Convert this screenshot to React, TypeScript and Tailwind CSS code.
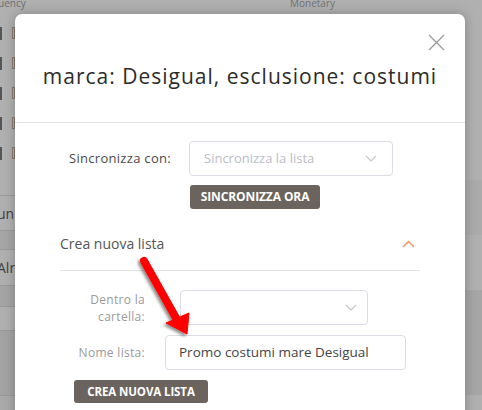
import React from "react";

const font = "font-['Open_Sans','Noto_Sans',sans-serif]";

const ChevronDown = ({ className }: { className?: string }) => (
  <svg className={className} width="12" height="7" viewBox="0 0 12 7" fill="none">
    <path d="M1 1l5 5 5-5" stroke="currentColor" strokeWidth="1.2" />
  </svg>
);

// the page behind the dimmed overlay, only its edges show
const Backdrop = () => (
  <div className="absolute inset-0 flex bg-[#b0b0b0]">
    <div className="w-[15px] shrink-0 flex flex-col">
      <p className="h-[31px] -ml-[2px] -mt-[4px] text-[10px] text-[#6e6e6e] whitespace-nowrap">uency</p>
      <div className="flex flex-col gap-[17px]">
        {[0, 1, 2, 3, 4].map((i) => (
          <div key={i} className="flex gap-[10px]">
            <div className="w-[2px] h-[13px] bg-[#555]" />
            <div className="w-[4px] h-[12px] border border-[#8a7a70]" />
          </div>
        ))}
      </div>
      <div className="mt-[35px] h-[35px] border-t border-[#999] flex items-center overflow-hidden">
        <span className="-ml-[3px] text-[14px] text-[#3f3f3f]">un</span>
      </div>
      <div className="h-[20px] bg-[#a6a6a6] border-y border-[#9a9a9a]" />
      <div className="h-[35px] flex items-center overflow-hidden">
        <span className="-ml-[3px] text-[14px] text-[#3f3f3f]">Alr</span>
      </div>
      <div className="h-[22px] bg-[#a5a5a5] border-y border-[#9a9a9a]" />
      <div className="h-[23px]" />
      <div className="h-[65px] bg-[#a3a3a3] border-t border-[#999]" />
      <div className="flex-1 bg-[#a9a9a9] border-t border-[#999]" />
    </div>
    <div className="flex-1">
      <p className="ml-[275px] -mt-[4px] text-[10px] text-[#707070]">Monetary</p>
    </div>
    <div className="w-[17px] shrink-0 flex flex-col">
      <div className="h-[180px]" />
      <div className="h-[55px] bg-[#ababab]" />
      <div className="h-[55px]" />
      <div className="h-[105px] bg-[#a6a6a6]" />
    </div>
  </div>
);

const Arrow = () => (
  <svg className="absolute left-0 top-0 pointer-events-none" width="482" height="410">
    <defs>
      <filter id="sh" x="-20%" y="-20%" width="140%" height="140%">
        <feDropShadow dx="-2" dy="2" stdDeviation="1.5" floodColor="#000" floodOpacity="0.45" />
      </filter>
    </defs>
    <g filter="url(#sh)" fill="#f00" stroke="#f00">
      <line x1="144" y1="261" x2="176" y2="318" strokeWidth="8" strokeLinecap="round" />
      <polygon points="166,323 189,313 187,334" strokeWidth="1" strokeLinejoin="round" />
    </g>
  </svg>
);

export default function App() {
  return (
    <div className={`relative w-[482px] h-[410px] overflow-hidden ${font}`}>
      <Backdrop />
      <div className="absolute left-[15px] top-[14px] w-[450px] h-[420px] rounded-[7px] bg-white shadow-[0_0_12px_rgba(0,0,0,0.25)]">
        {/* header */}
        <div className="relative h-[109px] border-b border-[#e3e3e3] pt-[48px] text-center">
          <h1 className="text-[21px] leading-[28px] tracking-[1px] text-[#2b2b2b]">
            marca: Desigual, esclusione: costumi
          </h1>
          <button className="absolute right-[20px] top-[20px] text-[#9a9a9a]">
            <svg width="17" height="17" viewBox="0 0 17 17">
              <path d="M1 1l15 15M16 1L1 16" stroke="currentColor" strokeWidth="1.3" />
            </svg>
          </button>
        </div>

        {/* sync */}
        <div className="flex items-center pt-[18px]">
          <label className="w-[156px] text-right text-[13px] tracking-[0.3px] text-[#4a4a4a]">Sincronizza con:</label>
          <div className="ml-[18px] w-[204px] h-[35px] flex items-center justify-between pl-[14px] pr-[15px] border border-[#dcdce6] rounded-[4px]">
            <span className="text-[13px] text-[#bcbcc6]">Sincronizza la lista</span>
            <ChevronDown className="text-[#c6c6d0]" />
          </div>
        </div>
        <button className="ml-[175px] mt-[9px] w-[130px] h-[24px] rounded-[3px] bg-[#6b645e] text-white text-[12px] font-bold tracking-[-0.1px]">
          SINCRONIZZA ORA
        </button>

        {/* new list */}
        <div className="mx-[45px] mt-[8px] h-[54px] flex items-center justify-between border-b border-[#e3e3e3]">
          <span className="text-[14px] text-[#555]">Crea nuova lista</span>
          <svg className="mr-[5px]" width="13" height="8" viewBox="0 0 13 8" fill="none">
            <path d="M1 7l5.5-5.5L12 7" stroke="#ff8a5c" strokeWidth="1.4" />
          </svg>
        </div>

        <div className="flex items-center mt-[19px]">
          <label className="w-[130px] text-right text-[12px] leading-[17px] tracking-[0.3px] text-[#9a9a9a]">
            Dentro la
            <br />
            cartella:
          </label>
          <div className="ml-[35px] w-[188px] h-[35px] flex items-center justify-end pr-[10px] border border-[#dcdce6] rounded-[4px]">
            <ChevronDown className="text-[#c6c6d0]" />
          </div>
        </div>
        <div className="flex items-center mt-[10px]">
          <label className="w-[130px] text-right text-[12px] tracking-[0.3px] text-[#9a9a9a]">Nome lista:</label>
          <div className="ml-[20px] w-[241px] h-[35px] flex items-center pl-[13px] border border-[#dcdce6] rounded-[4px]">
            <span className="text-[13.5px] text-[#444]">Promo costumi mare Desigual</span>
          </div>
        </div>
        <button className="ml-[59px] mt-[10px] w-[134px] h-[23px] rounded-[3px] bg-[#6b645e] text-white text-[11.5px] font-bold tracking-[-0.1px]">
          CREA NUOVA LISTA
        </button>
      </div>
      <Arrow />
    </div>
  );
}
